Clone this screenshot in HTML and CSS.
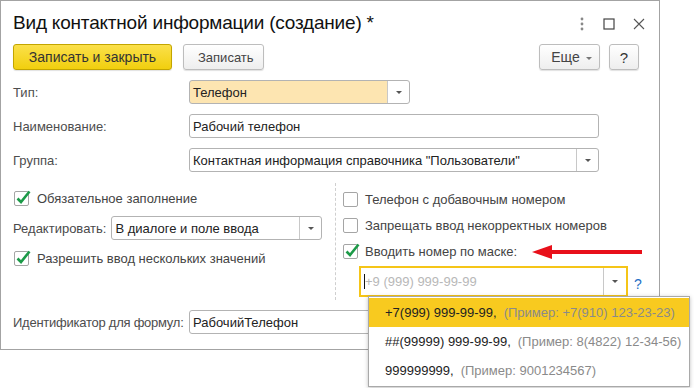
FILE: index.html
```html
<!DOCTYPE html>
<html lang="ru">
<head>
  <meta charset="UTF-8" />
  <title>Вид контактной информации</title>
  <link rel="stylesheet" href="styles.css">
</head>
<body>

  <div class="window">
    <div class="titlebar">
      <h1 class="title">Вид контактной информации (создание) *</h1>
      <div class="win-controls">
        <svg width="6" height="14" viewBox="0 0 6 14"><circle cx="3" cy="2" r="1.4" fill="#888"/><circle cx="3" cy="7" r="1.4" fill="#888"/><circle cx="3" cy="12" r="1.4" fill="#888"/></svg>
        <svg width="12" height="12" viewBox="0 0 12 12"><rect x="1" y="1" width="10" height="10" fill="none" stroke="#444" stroke-width="1.2"/></svg>
        <svg width="12" height="12" viewBox="0 0 12 12"><path d="M1 1 L11 11 M11 1 L1 11" stroke="#555" stroke-width="1.1"/></svg>
      </div>
    </div>

    <div class="toolbar">
      <button class="btn btn-primary">Записать и закрыть</button>
      <button class="btn btn-save">Записать</button>
      <div class="spacer"></div>
      <button class="btn btn-more">Еще<span class="caret"></span></button>
      <button class="btn btn-help">?</button>
    </div>

    <div class="fields">
      <label class="lbl">Тип:</label>
      <div class="input combo highlight w-type"><span class="val">Телефон</span><span class="drop"><span class="caret"></span></span></div>

      <label class="lbl">Наименование:</label>
      <div class="input w-full"><span class="val">Рабочий телефон</span></div>

      <label class="lbl">Группа:</label>
      <div class="input combo w-full"><span class="val">Контактная информация справочника "Пользователи"</span><span class="drop"><span class="caret"></span></span></div>
    </div>

    <div class="columns">
      <div class="col-left">
        <div class="check-row">
          <span class="box checked"><svg viewBox="0 0 18 18"><path d="M3.5 9.5 L7 13 L15.5 2.5" fill="none" stroke="#1c9a48" stroke-width="2.6"/></svg></span>
          <span class="check-text">Обязательное заполнение</span>
        </div>
        <div class="edit-row">
          <label class="lbl-inline">Редактировать:</label>
          <div class="input combo w-edit"><span class="val">В диалоге и поле ввода</span><span class="drop"><span class="caret"></span></span></div>
        </div>
        <div class="check-row">
          <span class="box checked"><svg viewBox="0 0 18 18"><path d="M3.5 9.5 L7 13 L15.5 2.5" fill="none" stroke="#1c9a48" stroke-width="2.6"/></svg></span>
          <span class="check-text">Разрешить ввод нескольких значений</span>
        </div>
      </div>

      <div class="col-right">
        <div class="check-row tight">
          <span class="box"></span>
          <span class="check-text">Телефон с добавочным номером</span>
        </div>
        <div class="check-row tight">
          <span class="box"></span>
          <span class="check-text">Запрещать ввод некорректных номеров</span>
        </div>
        <div class="check-row tight">
          <span class="box checked"><svg viewBox="0 0 18 18"><path d="M3.5 9.5 L7 13 L15.5 2.5" fill="none" stroke="#1c9a48" stroke-width="2.6"/></svg></span>
          <span class="check-text">Вводить номер по маске:</span>
        </div>
        <div class="mask-row">
          <div class="mask-field">
            <div class="input combo w-mask"><span class="val placeholder"><span class="cursor"></span>+9 (999) 999-99-99</span><span class="drop"><span class="caret"></span></span></div>
          </div>
          <span class="help-link">?</span>
        </div>
      </div>
    </div>

    <div class="id-row">
      <label class="lbl lbl-id">Идентификатор для формул:</label>
      <div class="input w-id"><span class="val">РабочийТелефон</span></div>
    </div>
  </div>

  <svg class="arrow" width="112" height="14" viewBox="0 0 112 14">
    <path d="M18 5 H110 V9 H18 Z" fill="#e8101a"/>
    <path d="M0 7 L20 0 L20 14 Z" fill="#e8101a"/>
  </svg>

  <div class="popup">
    <div class="popup-item active"><span class="mask">+7(999) 999-99-99,</span><span class="example">(Пример: +7(910) 123-23-23)</span></div>
    <div class="popup-item"><span class="mask">##(99999) 999-99-99,</span><span class="example">(Пример: 8(4822) 12-34-56)</span></div>
    <div class="popup-item"><span class="mask">999999999,</span><span class="example">(Пример: 9001234567)</span></div>
  </div>

</body>
</html>
```

FILE: styles.css
```css
body {
  margin: 0;
  padding: 0;
  background-color: #fff;
  font-family: 'Liberation Sans', Arial, sans-serif;
  font-size: 13px;
  color: #4a4a4a;
}

.window {
  position: relative;
  width: 634px;
  height: 348px;
  border: 1px solid #a3a3a3;
  padding: 0 12px;
  background-color: #fff;
}

.titlebar {
  display: flex;
  align-items: center;
  height: 43px;
}

.title {
  flex: 1;
  margin: 0;
  font-size: 19px;
  letter-spacing: -0.2px;
  font-weight: normal;
  color: #111;
  padding-top: 1px;
}

.win-controls {
  display: flex;
  align-items: center;
  gap: 18px;
  margin-right: 2px;
  padding-top: 2px;
}

.toolbar {
  display: flex;
  align-items: center;
  gap: 11px;
  height: 26px;
}

.spacer {
  flex: 1;
}

.btn {
  height: 26px;
  font-family: inherit;
  font-size: 13px;
  color: #444;
  border: 1px solid #bdbdbd;
  border-radius: 3px;
  background: linear-gradient(#ffffff, #eeeeee);
  box-shadow: 0 1px 1px rgba(0, 0, 0, 0.12);
  padding: 0 14px;
  white-space: nowrap;
}

.btn-primary {
  width: 159px;
  font-size: 14px;
  color: #333;
  border-color: #c3a500;
  background: linear-gradient(#fbe04a, #f1cf0e);
}

.btn-save {
  width: 81px;
}

.btn-more {
  width: 61px;
  padding: 0 0 0 4px;
  font-size: 14px;
  margin-right: -2px;
}

.btn-more .caret {
  margin-left: 6px;
  border-top-color: #777;
}

.btn-help {
  width: 30px;
  padding: 0;
  font-size: 15px;
  color: #333;
  margin-right: 8px;
}

.caret {
  display: inline-block;
  width: 0;
  height: 0;
  border-left: 3px solid transparent;
  border-right: 3px solid transparent;
  border-top: 3px solid #555;
  vertical-align: middle;
  margin-left: 3px;
}

.fields {
  display: grid;
  grid-template-columns: 176px auto;
  row-gap: 10px;
  align-items: center;
  margin-top: 10px;
}

.lbl {
  color: #4d4d4d;
  white-space: nowrap;
}

.lbl-id {
  letter-spacing: -0.25px;
}

.input {
  display: flex;
  align-items: center;
  height: 22px;
  border: 1px solid #b3b3b3;
  border-radius: 3px;
  background-color: #fff;
  color: #222;
  box-sizing: content-box;
}

.input .val {
  flex: 1;
  padding-left: 3px;
  white-space: nowrap;
  overflow: hidden;
}

.drop {
  display: flex;
  align-items: center;
  justify-content: center;
  width: 21px;
  height: 22px;
  border-left: 1px solid #c8c8c8;
}

.drop .caret {
  margin: 0;
}

.highlight {
  background: linear-gradient(to right, #fde5b1 0, #fde5b1 calc(100% - 22px), #fff calc(100% - 22px));
}

.w-type {
  width: 219px;
}

.w-full {
  width: 408px;
}

.columns {
  display: flex;
  margin-top: 11px;
  height: 117px;
}

.col-left {
  width: 322px;
  padding-top: 3px;
  display: flex;
  flex-direction: column;
  gap: 6px;
}

.col-right {
  flex: 1;
  border-left: 1px dashed #cfcfcf;
  padding-left: 7px;
  padding-top: 4px;
  display: flex;
  flex-direction: column;
  gap: 2px;
}

.check-row {
  display: flex;
  align-items: center;
  height: 24px;
  gap: 8px;
  padding-left: 1px;
}

.check-row.tight {
  gap: 7px;
  padding-left: 0;
}

.box {
  position: relative;
  width: 13px;
  height: 13px;
  border: 1px solid #a5a5a5;
  border-radius: 2px;
  background-color: #fff;
  flex-shrink: 0;
}

.box svg {
  position: absolute;
  left: -1px;
  top: -3px;
  width: 18px;
  height: 18px;
}

.check-text {
  color: #444;
}

.edit-row {
  display: flex;
  align-items: center;
  gap: 5px;
}

.w-edit {
  width: 209px;
}

.mask-row {
  display: flex;
  align-items: center;
  gap: 6px;
  margin-left: 16px;
  margin-top: 1px;
}

.mask-field {
  border: 2px solid #f5c518;
}

.mask-field .input {
  border: none;
  border-radius: 0;
  height: 27px;
}

.mask-field .drop {
  height: 27px;
  width: 22px;
}

.w-mask {
  width: 265px;
}

.placeholder {
  color: #b8b8b8;
  display: flex;
  align-items: center;
}

.cursor {
  display: inline-block;
  width: 1px;
  height: 15px;
  background-color: #111;
}

.help-link {
  color: #1f6fc5;
  font-size: 14px;
  padding-top: 4px;
}

.id-row {
  display: grid;
  grid-template-columns: 176px auto;
  align-items: center;
  margin-top: 10px;
}

.w-id {
  width: 408px;
}

.arrow {
  position: absolute;
  left: 532px;
  top: 245px;
}

.popup {
  position: absolute;
  left: 368px;
  top: 296px;
  width: 320px;
  border: 1px solid #a9a9a9;
  background-color: #fff;
  box-shadow: 0 1px 4px rgba(0, 0, 0, 0.25);
  padding: 1px 0 1px;
}

.popup-item {
  display: flex;
  align-items: center;
  height: 29px;
  padding-left: 16px;
  color: #222;
  white-space: nowrap;
}

.popup-item.active {
  background-color: #f8ca1f;
}

.popup-item .example {
  color: #8a8a8a;
  margin-left: 7px;
}
```
